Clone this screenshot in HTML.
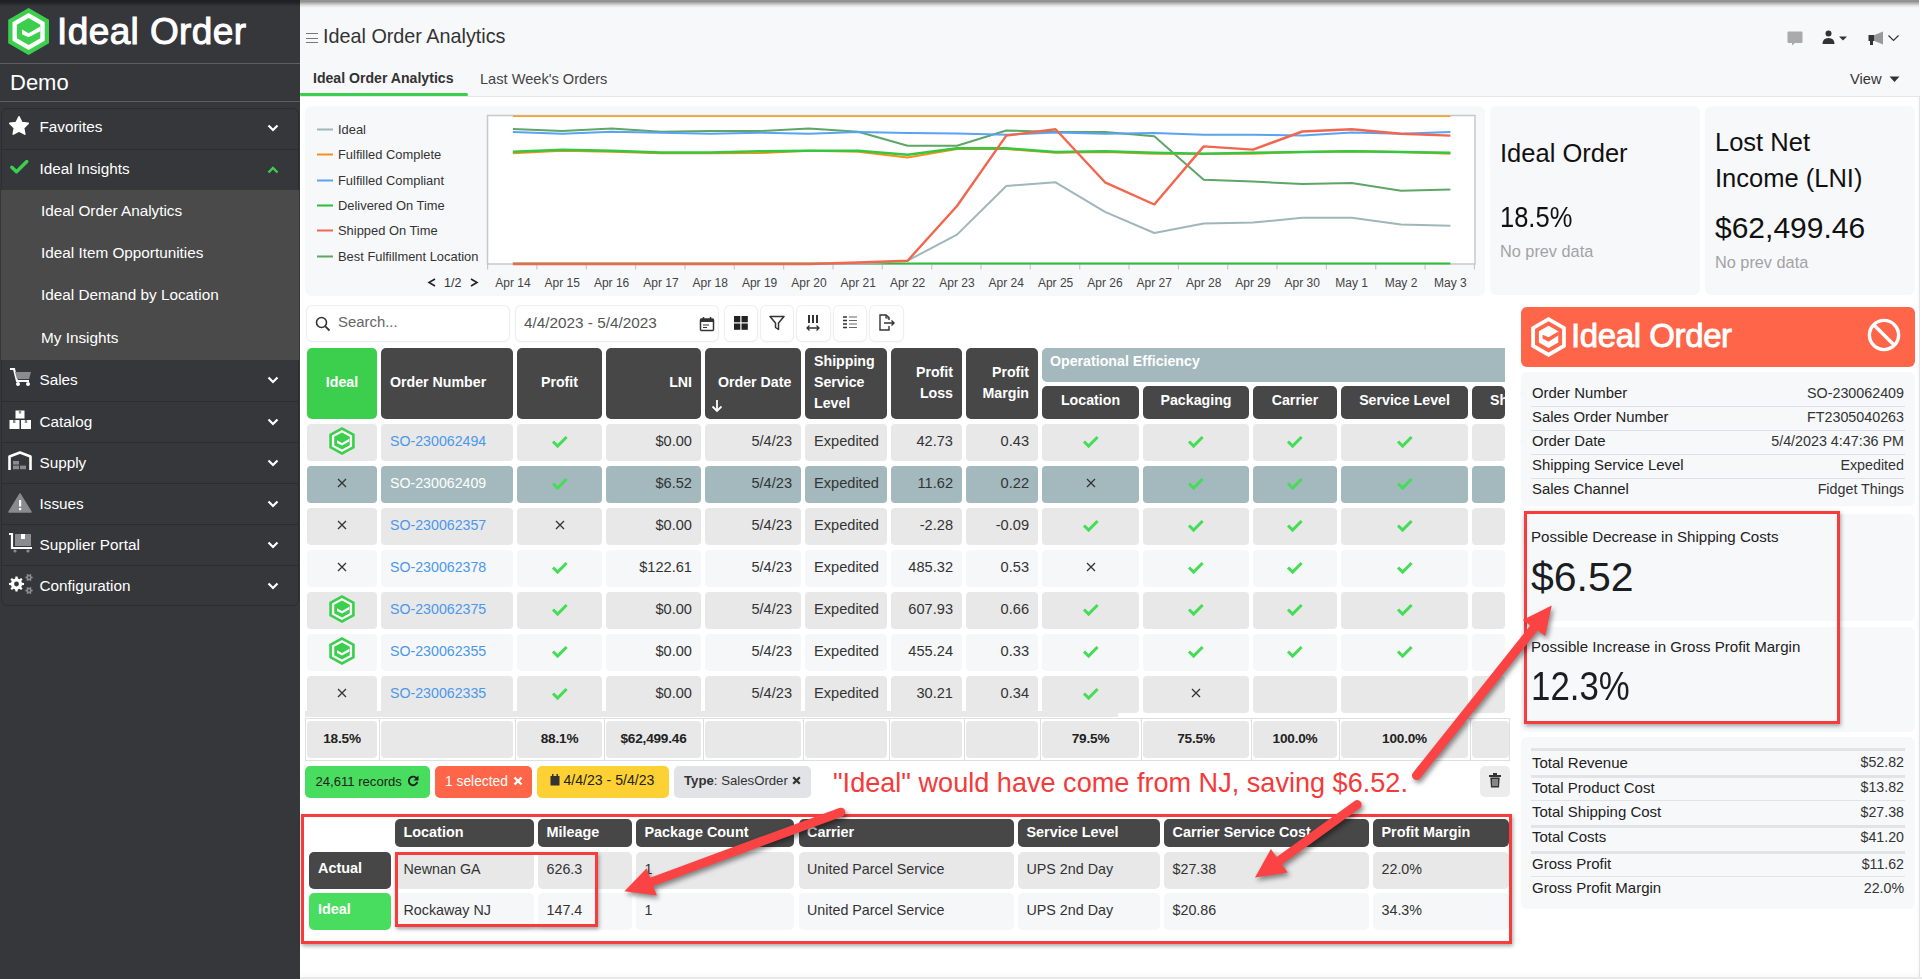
<!DOCTYPE html>
<html><head><meta charset="utf-8">
<style>
*{box-sizing:border-box;margin:0;padding:0}
html,body{width:1922px;height:979px;overflow:hidden;background:#fff;font-family:"Liberation Sans",sans-serif;color:#222}
.a{position:absolute}
.nw{white-space:nowrap}
#sb{left:0;top:0;width:300px;height:979px;background:#36373b}
.sep{left:0;width:300px;height:1px;background:#5e5f63}
.mi{left:1px;width:298px;height:41px;border-top:1px solid #2c2d31}
.mi .t{left:38.5px;top:10px;font-size:15.3px;color:#fff}
.chev{left:266px;top:16px;width:12px;height:8px}
.sub{left:41px;font-size:15.3px;color:#fff}
#main{left:300px;top:0;width:1622px;height:979px;background:#fff}
</style></head><body>
<div id="sb" class="a">
  <svg class="a" style="left:0;top:0" width="60" height="64" viewBox="0 0 60 64">
    <polygon points="28.6,8 49,19.75 49,43.25 28.6,55 8.2,43.25 8.2,19.75" fill="#3ccf4e"/>
    <polygon points="28.6,12.9 44.7,22.2 44.7,40.8 28.6,50.1 12.5,40.8 12.5,22.2" fill="#fff"/>
    <polygon points="28.6,18 40.3,24.75 40.3,38.25 28.6,45 16.9,38.25 16.9,24.75" fill="#3ccf4e"/>
    <polygon points="22,29.4 28.6,33.3 40.3,26.5 40.3,31.2 28.6,37.3 22,34.3" fill="#fff"/>
  </svg>
  <div class="a nw" style="left:57px;top:11px;font-size:37px;color:#fff;-webkit-text-stroke:1px #fff;letter-spacing:0.4px">Ideal Order</div>
  <div class="a sep" style="top:63px"></div>
  <div class="a nw" style="left:10px;top:70px;font-size:22px;color:#fff">Demo</div>
  <div class="a sep" style="top:101px"></div>
  <div class="a" style="left:1px;top:108px;width:298px;height:498px;border-radius:6px;border:1px solid #2c2d31;background:#36373b"></div>
  <!-- menu rows -->
  <div class="a mi" style="top:108px;border-top:none">
    <svg class="a" style="left:7px;top:7px" width="22" height="21" viewBox="0 0 22 21"><polygon points="11,1.8 13.9,7.6 20.2,8.4 15.6,12.8 16.8,19.1 11,16 5.2,19.1 6.4,12.8 1.8,8.4 8.1,7.6" fill="#fff" stroke="#fff" stroke-width="1.6" stroke-linejoin="round"/></svg>
    <div class="a t nw">Favorites</div>
    <svg class="a chev" viewBox="0 0 12 8"><polyline points="1.5,1.5 6,6 10.5,1.5" fill="none" stroke="#fff" stroke-width="2.2"/></svg>
  </div>
  <div class="a mi" style="top:149px">
    <svg class="a" style="left:8px;top:8px" width="22" height="18" viewBox="0 0 22 18"><polyline points="2.8,9.2 7.5,13.8 17.8,3.5" fill="none" stroke="#3ccf4e" stroke-width="3.4" stroke-linecap="round" stroke-linejoin="round"/></svg>
    <div class="a t nw">Ideal Insights</div>
    <svg class="a chev" viewBox="0 0 12 8"><polyline points="1.5,6.5 6,2 10.5,6.5" fill="none" stroke="#3ccf4e" stroke-width="2.4"/></svg>
  </div>
  <div class="a" style="left:1px;top:190px;width:298px;height:170px;background:#4a4a4a"></div>
  <div class="a sub nw" style="top:202px">Ideal Order Analytics</div>
  <div class="a sub nw" style="top:244px">Ideal Item Opportunities</div>
  <div class="a sub nw" style="top:286px">Ideal Demand by Location</div>
  <div class="a sub nw" style="top:329px">My Insights</div>
  <div class="a mi" style="top:360px;border-top:none">
    <svg class="a" style="left:8px;top:6px" width="24" height="22" viewBox="0 0 24 22"><path d="M1,3 H5 L8,15 H20" fill="none" stroke="#fff" stroke-width="2.2"/><polygon points="6,6 22,6 20,13 8,13" fill="#8a8b8e"/><circle cx="9" cy="18" r="2" fill="#fff"/><circle cx="19" cy="18" r="2" fill="#fff"/></svg>
    <div class="a t nw" style="top:10.5px">Sales</div>
    <svg class="a chev" viewBox="0 0 12 8"><polyline points="1.5,1.5 6,6 10.5,1.5" fill="none" stroke="#fff" stroke-width="2.2"/></svg>
  </div>
  <div class="a mi" style="top:401px">
    <svg class="a" style="left:8px;top:8px" width="24" height="20" viewBox="0 0 24 20"><rect x="6.5" y="0.5" width="9" height="8" fill="#fff"/><rect x="0.5" y="10" width="10" height="9" fill="#fff"/><rect x="12" y="10" width="10" height="9" fill="#fff"/><rect x="9.8" y="0.5" width="2.4" height="3" fill="#8a8b8e"/><rect x="4" y="10" width="2.4" height="3" fill="#8a8b8e"/><rect x="15.8" y="10" width="2.4" height="3" fill="#8a8b8e"/></svg>
    <div class="a t nw" style="top:10.5px">Catalog</div>
    <svg class="a chev" viewBox="0 0 12 8"><polyline points="1.5,1.5 6,6 10.5,1.5" fill="none" stroke="#fff" stroke-width="2.2"/></svg>
  </div>
  <div class="a mi" style="top:442px">
    <svg class="a" style="left:7px;top:8px" width="24" height="20" viewBox="0 0 24 20"><path d="M1.5,19 V5.5 L12,1.5 L22.5,5.5 V19" fill="none" stroke="#fff" stroke-width="2.6" stroke-linejoin="round"/><rect x="5" y="10" width="6" height="3.6" fill="#8a8b8e"/><rect x="5" y="14.6" width="6" height="3.6" fill="#8a8b8e"/><rect x="12" y="14.6" width="6" height="3.6" fill="#8a8b8e"/></svg>
    <div class="a t nw" style="top:10.5px">Supply</div>
    <svg class="a chev" viewBox="0 0 12 8"><polyline points="1.5,1.5 6,6 10.5,1.5" fill="none" stroke="#fff" stroke-width="2.2"/></svg>
  </div>
  <div class="a mi" style="top:483px">
    <svg class="a" style="left:7px;top:9px" width="24" height="20" viewBox="0 0 24 20"><polygon points="12,1 23,19 1,19" fill="#8a8b8e" stroke="#8a8b8e" stroke-linejoin="round" stroke-width="1.5"/><rect x="11" y="7" width="2.2" height="6.5" fill="#fff"/><rect x="11" y="15" width="2.2" height="2.2" fill="#fff"/></svg>
    <div class="a t nw" style="top:10.5px">Issues</div>
    <svg class="a chev" viewBox="0 0 12 8"><polyline points="1.5,1.5 6,6 10.5,1.5" fill="none" stroke="#fff" stroke-width="2.2"/></svg>
  </div>
  <div class="a mi" style="top:524px">
    <svg class="a" style="left:7px;top:7px" width="26" height="22" viewBox="0 0 26 22"><path d="M1,2 H4 V16 H24" fill="none" stroke="#fff" stroke-width="2.2"/><rect x="7" y="2" width="16" height="12" fill="#8a8b8e"/><rect x="13" y="2" width="4" height="5" fill="#fff"/><circle cx="7" cy="19" r="1.6" fill="#8a8b8e"/><circle cx="20" cy="19" r="1.6" fill="#8a8b8e"/></svg>
    <div class="a t nw" style="top:10.5px">Supplier Portal</div>
    <svg class="a chev" viewBox="0 0 12 8"><polyline points="1.5,1.5 6,6 10.5,1.5" fill="none" stroke="#fff" stroke-width="2.2"/></svg>
  </div>
  <div class="a mi" style="top:565px">
    <svg class="a" style="left:7px;top:6px" width="26" height="24" viewBox="0 0 26 24"><path d="M13.95,10.69 L16.02,10.93 L16.02,13.07 L13.95,13.31 L13.27,14.93 L14.58,16.56 L13.06,18.08 L11.43,16.77 L9.81,17.45 L9.57,19.52 L7.43,19.52 L7.19,17.45 L5.57,16.77 L3.94,18.08 L2.42,16.56 L3.73,14.93 L3.05,13.31 L0.98,13.07 L0.98,10.93 L3.05,10.69 L3.73,9.07 L2.42,7.44 L3.94,5.92 L5.57,7.23 L7.19,6.55 L7.43,4.48 L9.57,4.48 L9.81,6.55 L11.43,7.23 L13.06,5.92 L14.58,7.44 L13.27,9.07 Z" fill="#fff"/><circle cx="8.5" cy="12" r="2.4" fill="#36373b"/><path d="M23.66,4.63 L24.73,4.79 L24.73,6.21 L23.66,6.37 L23.08,7.37 L23.48,8.38 L22.25,9.09 L21.58,8.24 L20.42,8.24 L19.75,9.09 L18.52,8.38 L18.92,7.37 L18.34,6.37 L17.27,6.21 L17.27,4.79 L18.34,4.63 L18.92,3.63 L18.52,2.62 L19.75,1.91 L20.42,2.76 L21.58,2.76 L22.25,1.91 L23.48,2.62 L23.08,3.63 Z" fill="#8a8b8e"/><circle cx="21" cy="5.5" r="1.1" fill="#36373b"/><path d="M23.66,17.63 L24.73,17.79 L24.73,19.21 L23.66,19.37 L23.08,20.37 L23.48,21.38 L22.25,22.09 L21.58,21.24 L20.42,21.24 L19.75,22.09 L18.52,21.38 L18.92,20.37 L18.34,19.37 L17.27,19.21 L17.27,17.79 L18.34,17.63 L18.92,16.63 L18.52,15.62 L19.75,14.91 L20.42,15.76 L21.58,15.76 L22.25,14.91 L23.48,15.62 L23.08,16.63 Z" fill="#8a8b8e"/><circle cx="21" cy="18.5" r="1.1" fill="#36373b"/></svg>
    <div class="a t nw" style="top:10.5px">Configuration</div>
    <svg class="a chev" viewBox="0 0 12 8"><polyline points="1.5,1.5 6,6 10.5,1.5" fill="none" stroke="#fff" stroke-width="2.2"/></svg>
  </div>
</div>

<div id="main" class="a">
  <div class="a" style="left:0;top:0;width:1620px;height:96px;background:#f7f8fa"></div>
  <div class="a" style="left:0;top:96px;width:1620px;height:1px;background:#e6e7e9"></div>
</div>
<!--HEADER-->
<div class="a" style="left:306px;top:33px;width:12px;height:10px;border-top:1.5px solid #777;border-bottom:1.5px solid #777"></div>
<div class="a" style="left:306px;top:37.5px;width:12px;height:1.5px;background:#777"></div>
<div class="a nw" style="left:323px;top:25px;font-size:19.8px;color:#333">Ideal Order Analytics</div>
<div class="a nw" style="left:313px;top:70px;font-size:14.1px;font-weight:bold;color:#333">Ideal Order Analytics</div>
<div class="a nw" style="left:480px;top:71px;font-size:14.6px;color:#444">Last Week's Orders</div>
<div class="a" style="left:300px;top:93px;width:168px;height:3px;background:#3ccf4e;border-radius:0 2px 2px 2px"></div>
<!-- header icons -->
<svg class="a" style="left:1786px;top:30px" width="18" height="16" viewBox="0 0 18 16"><path d="M2.5,1.5 H15.5 Q16.5,1.5 16.5,2.5 V12 Q16.5,13 15.5,13 H9 L6,15.5 V13 H2.5 Q1.5,13 1.5,12 V2.5 Q1.5,1.5 2.5,1.5Z" fill="#aaa"/></svg>
<svg class="a" style="left:1821px;top:30px" width="28" height="16" viewBox="0 0 28 16"><circle cx="7.5" cy="3.5" r="3" fill="#333"/><path d="M1.5,14 Q1.5,8 7.5,8 Q13.5,8 13.5,14Z" fill="#333"/><polygon points="18,6.5 26,6.5 22,10.5" fill="#333"/></svg>
<svg class="a" style="left:1867px;top:30px" width="34" height="17" viewBox="0 0 34 17"><rect x="1.5" y="5" width="6" height="6" fill="#333"/><rect x="3" y="10" width="3" height="5" fill="#333"/><polygon points="7.5,5 16,1.5 16,14.5 7.5,11" fill="#999"/><polyline points="21.5,5.5 26.5,10.5 31.5,5.5" fill="none" stroke="#333" stroke-width="1.2"/></svg>
<div class="a nw" style="left:1850px;top:71px;font-size:14.7px;color:#333">View</div>
<svg class="a" style="left:1889px;top:76px" width="11" height="7" viewBox="0 0 11 7"><polygon points="0.5,0.5 10.5,0.5 5.5,6" fill="#333"/></svg>
<!--CHART-->
<div class="a" style="left:305px;top:106px;width:1180px;height:190px;background:#f7f8fa;border-radius:6px"></div>
<svg class="a" style="left:305px;top:106px" width="1180" height="190" viewBox="305 106 1180 190">
 <rect x="487.5" y="115.5" width="987.5" height="148.5" fill="#fff" stroke="#c8c8c8" stroke-width="1.5"/>
 <g stroke="#c8c8c8" stroke-width="1.2">
 <line x1="487.6" y1="264" x2="487.6" y2="269.5"/><line x1="536.9" y1="264" x2="536.9" y2="269.5"/><line x1="586.3" y1="264" x2="586.3" y2="269.5"/><line x1="635.6" y1="264" x2="635.6" y2="269.5"/><line x1="685.0" y1="264" x2="685.0" y2="269.5"/><line x1="734.3" y1="264" x2="734.3" y2="269.5"/><line x1="783.6" y1="264" x2="783.6" y2="269.5"/><line x1="833.0" y1="264" x2="833.0" y2="269.5"/><line x1="882.3" y1="264" x2="882.3" y2="269.5"/><line x1="931.7" y1="264" x2="931.7" y2="269.5"/><line x1="981.0" y1="264" x2="981.0" y2="269.5"/><line x1="1030.3" y1="264" x2="1030.3" y2="269.5"/><line x1="1079.7" y1="264" x2="1079.7" y2="269.5"/><line x1="1129.0" y1="264" x2="1129.0" y2="269.5"/><line x1="1178.4" y1="264" x2="1178.4" y2="269.5"/><line x1="1227.7" y1="264" x2="1227.7" y2="269.5"/><line x1="1277.0" y1="264" x2="1277.0" y2="269.5"/><line x1="1326.4" y1="264" x2="1326.4" y2="269.5"/><line x1="1375.7" y1="264" x2="1375.7" y2="269.5"/><line x1="1425.1" y1="264" x2="1425.1" y2="269.5"/><line x1="1474.4" y1="264" x2="1474.4" y2="269.5"/>
 </g>
 <g fill="none" stroke-width="2" stroke-linejoin="round">
 <polyline stroke="#f5a31a" stroke-width="1.6" points="512.9,116.3 1450.4,116.3"/>
 <polyline stroke="#2dbd3a" points="512.9,263.5 1450.4,263.5"/>
 <polyline stroke="#9fb6ba" points="512.9,264.0 562.2,264.0 611.6,264.0 660.9,264.0 710.3,264.0 759.6,264.0 808.9,264.0 858.3,264.0 907.6,260.7 957.0,234.6 1006.3,186.0 1055.6,182.3 1105.0,211.8 1154.3,233.0 1203.7,223.5 1253.0,222.6 1302.3,217.8 1351.7,217.8 1401.0,224.5 1450.4,225.7"/>
 <polyline stroke="#5ea566" points="512.9,129.0 562.2,131.0 611.6,128.5 660.9,131.7 710.3,131.0 759.6,131.0 808.9,128.5 858.3,131.7 907.6,145.8 957.0,145.8 1006.3,130.5 1055.6,132.0 1105.0,132.0 1154.3,136.3 1203.7,179.7 1253.0,181.6 1302.3,183.9 1351.7,182.9 1401.0,190.8 1450.4,189.6"/>
 <polyline stroke="#5aa2f2" points="512.9,132.0 562.2,133.7 611.6,131.7 660.9,132.7 710.3,133.7 759.6,132.7 808.9,133.7 858.3,132.0 907.6,133.0 957.0,133.4 1006.3,134.7 1055.6,132.4 1105.0,133.7 1154.3,133.0 1203.7,134.7 1253.0,134.7 1302.3,135.6 1351.7,132.4 1401.0,133.7 1450.4,132.0"/>
 <polyline stroke="#f5901a" points="512.9,153.3 562.2,150.8 611.6,151.8 660.9,153.3 710.3,153.3 759.6,153.0 808.9,150.8 858.3,151.8 907.6,157.5 957.0,149.0 1006.3,149.0 1055.6,152.8 1105.0,152.0 1154.3,153.7 1203.7,153.7 1253.0,153.7 1302.3,152.0 1351.7,151.2 1401.0,152.0 1450.4,153.7"/>
 <polyline stroke="#37c63f" stroke-width="2.4" points="512.9,151.8 562.2,149.8 611.6,150.8 660.9,152.5 710.3,152.5 759.6,151.2 808.9,150.8 858.3,150.8 907.6,154.7 957.0,148.3 1006.3,148.3 1055.6,152.0 1105.0,151.2 1154.3,152.8 1203.7,153.7 1253.0,152.8 1302.3,152.0 1351.7,151.2 1401.0,152.0 1450.4,152.8"/>
 <polyline stroke="#f2664f" stroke-width="2.4" points="512.9,264.0 562.2,264.0 611.6,264.0 660.9,264.0 710.3,264.0 759.6,264.0 808.9,264.0 858.3,262.5 907.6,260.7 957.0,206.0 1006.3,135.6 1055.6,129.3 1105.0,182.3 1154.3,204.5 1203.7,146.4 1253.0,149.6 1302.3,131.5 1351.7,129.3 1401.0,133.7 1450.4,135.6"/>
 </g>
 <g fill="#444" font-family="Liberation Sans" font-size="12" text-anchor="middle">
 <text x="512.9" y="287">Apr 14</text><text x="562.2" y="287">Apr 15</text><text x="611.6" y="287">Apr 16</text><text x="660.9" y="287">Apr 17</text><text x="710.3" y="287">Apr 18</text><text x="759.6" y="287">Apr 19</text><text x="808.9" y="287">Apr 20</text><text x="858.3" y="287">Apr 21</text><text x="907.6" y="287">Apr 22</text><text x="957.0" y="287">Apr 23</text><text x="1006.3" y="287">Apr 24</text><text x="1055.6" y="287">Apr 25</text><text x="1105.0" y="287">Apr 26</text><text x="1154.3" y="287">Apr 27</text><text x="1203.7" y="287">Apr 28</text><text x="1253.0" y="287">Apr 29</text><text x="1302.3" y="287">Apr 30</text><text x="1351.7" y="287">May 1</text><text x="1401.0" y="287">May 2</text><text x="1450.4" y="287">May 3</text>
 </g>
 <g font-family="Liberation Sans" font-size="12.9" fill="#333">
 <line x1="317" y1="129.5" x2="333" y2="129.5" stroke="#9fb6ba" stroke-width="2"/><text x="338" y="134">Ideal</text>
 <line x1="317" y1="154.5" x2="333" y2="154.5" stroke="#f5901a" stroke-width="2"/><text x="338" y="159">Fulfilled Complete</text>
 <line x1="317" y1="180.5" x2="333" y2="180.5" stroke="#5aa2f2" stroke-width="2"/><text x="338" y="185">Fulfilled Compliant</text>
 <line x1="317" y1="205.5" x2="333" y2="205.5" stroke="#2dbd3a" stroke-width="2"/><text x="338" y="210">Delivered On Time</text>
 <line x1="317" y1="230.5" x2="333" y2="230.5" stroke="#f2664f" stroke-width="2"/><text x="338" y="235">Shipped On Time</text>
 <line x1="317" y1="256.5" x2="333" y2="256.5" stroke="#5ea566" stroke-width="2"/><text x="338" y="261">Best Fulfillment Location</text>
 <text x="444" y="287" font-size="12.5">1/2</text>
 <polyline points="435,279 429,282.5 435,286" fill="none" stroke="#222" stroke-width="1.6"/>
 <polyline points="471,279 477,282.5 471,286" fill="none" stroke="#222" stroke-width="1.6"/>
 </g>
</svg>
<!--KPI-->
<div class="a" style="left:1490px;top:106px;width:210px;height:189px;background:#f7f8fa;border-radius:6px"></div>
<div class="a" style="left:1705px;top:106px;width:210px;height:189px;background:#f7f8fa;border-radius:6px"></div>
<div class="a nw" style="left:1500px;top:139px;font-size:25.5px;color:#111">Ideal Order</div>
<div class="a nw" style="left:1500px;top:200px;font-size:30px;color:#111;transform:scaleX(0.85);transform-origin:0 0">18.5%</div>
<div class="a nw" style="left:1500px;top:242px;font-size:16.3px;color:#a3a3a3">No prev data</div>
<div class="a nw" style="left:1715px;top:124px;font-size:25.5px;line-height:36px;color:#111">Lost Net<br>Income (LNI)</div>
<div class="a nw" style="left:1715px;top:211px;font-size:30px;color:#111">$62,499.46</div>
<div class="a nw" style="left:1715px;top:253px;font-size:16.3px;color:#a3a3a3">No prev data</div>

<!--TABLE-->
<div class="a" style="left:300px;top:340px;width:1210px;height:425px;overflow:hidden">
<div class="a" style="left:7px;top:8px;width:70px;height:71px;background:#3ccf4e;border-radius:4px;border-radius:5px"></div>
<div class="a" style="left:81px;top:8px;width:132px;height:71px;background:#474747;border-radius:4px;border-radius:5px"></div>
<div class="a" style="left:217px;top:8px;width:85px;height:71px;background:#474747;border-radius:4px;border-radius:5px"></div>
<div class="a" style="left:306px;top:8px;width:95px;height:71px;background:#474747;border-radius:4px;border-radius:5px"></div>
<div class="a" style="left:405px;top:8px;width:96px;height:71px;background:#474747;border-radius:4px;border-radius:5px"></div>
<div class="a" style="left:505px;top:8px;width:82px;height:71px;background:#474747;border-radius:4px;border-radius:5px"></div>
<div class="a" style="left:591px;top:8px;width:71px;height:71px;background:#474747;border-radius:4px;border-radius:5px"></div>
<div class="a" style="left:666px;top:8px;width:72px;height:71px;background:#474747;border-radius:4px;border-radius:5px"></div>
<div class="a" style="left:742px;top:8px;width:463px;height:34px;background:#a3b9bd;border-radius:4px;border-radius:5px 0 0 5px"></div>
<div class="a nw" style="left:750px;top:13px;font-size:14.2px;font-weight:bold;color:#fff">Operational Efficiency</div>
<div class="a" style="left:742px;top:46px;width:97px;height:33px;background:#474747;border-radius:4px;border-radius:5px"></div>
<div class="a" style="left:843px;top:46px;width:106px;height:33px;background:#474747;border-radius:4px;border-radius:5px"></div>
<div class="a" style="left:953px;top:46px;width:84px;height:33px;background:#474747;border-radius:4px;border-radius:5px"></div>
<div class="a" style="left:1041px;top:46px;width:127px;height:33px;background:#474747;border-radius:4px;border-radius:5px"></div>
<div class="a" style="left:1172px;top:46px;width:33px;height:33px;background:#474747;border-radius:4px;border-radius:5px"></div>
<div class="a nw" style="left:-58px;width:200px;text-align:center;top:34px;font-size:14.2px;font-weight:bold;color:#fff">Ideal</div>
<div class="a nw" style="left:90px;top:34px;font-size:14.2px;font-weight:bold;color:#fff">Order Number</div>
<div class="a nw" style="left:159.5px;width:200px;text-align:center;top:34px;font-size:14.2px;font-weight:bold;color:#fff">Profit</div>
<div class="a nw" style="right:818px;top:34px;font-size:14.2px;font-weight:bold;color:#fff">LNI</div>
<div class="a nw" style="left:418px;top:34px;font-size:14.2px;font-weight:bold;color:#fff">Order Date</div>
<svg class="a" style="left:410px;top:59px" width="14" height="14" viewBox="0 0 14 14"><path d="M7,1 V12 M2.5,7.5 L7,12 L11.5,7.5" stroke="#fff" stroke-width="1.8" fill="none"/></svg>
<div class="a nw" style="left:514px;top:11px;line-height:21px;font-size:14.2px;font-weight:bold;color:#fff">Shipping<br>Service<br>Level</div>
<div class="a nw" style="right:557px;top:22px;line-height:21px;text-align:right;font-size:14.2px;font-weight:bold;color:#fff">Profit<br>Loss</div>
<div class="a nw" style="right:481px;top:22px;line-height:21px;text-align:right;font-size:14.2px;font-weight:bold;color:#fff">Profit<br>Margin</div>
<div class="a nw" style="left:690.5px;width:200px;text-align:center;top:52px;font-size:14.2px;font-weight:bold;color:#fff">Location</div>
<div class="a nw" style="left:796px;width:200px;text-align:center;top:52px;font-size:14.2px;font-weight:bold;color:#fff">Packaging</div>
<div class="a nw" style="left:895px;width:200px;text-align:center;top:52px;font-size:14.2px;font-weight:bold;color:#fff">Carrier</div>
<div class="a nw" style="left:1004.5px;width:200px;text-align:center;top:52px;font-size:14.2px;font-weight:bold;color:#fff">Service Level</div>
<div class="a" style="left:1172px;top:46px;width:33px;height:33px;overflow:hidden"><div class="nw" style="padding:6px 0 0 18px;font-size:14.2px;font-weight:bold;color:#fff">Shipping</div></div>
<div class="a" style="left:7px;top:84px;width:70px;height:37px;background:#e8e8e8;border-radius:4px;"></div>
<div class="a" style="left:81px;top:84px;width:132px;height:37px;background:#e8e8e8;border-radius:4px;"></div>
<div class="a" style="left:217px;top:84px;width:85px;height:37px;background:#e8e8e8;border-radius:4px;"></div>
<div class="a" style="left:306px;top:84px;width:95px;height:37px;background:#e8e8e8;border-radius:4px;"></div>
<div class="a" style="left:405px;top:84px;width:96px;height:37px;background:#e8e8e8;border-radius:4px;"></div>
<div class="a" style="left:505px;top:84px;width:82px;height:37px;background:#e8e8e8;border-radius:4px;"></div>
<div class="a" style="left:591px;top:84px;width:71px;height:37px;background:#e8e8e8;border-radius:4px;"></div>
<div class="a" style="left:666px;top:84px;width:72px;height:37px;background:#e8e8e8;border-radius:4px;"></div>
<div class="a" style="left:742px;top:84px;width:97px;height:37px;background:#e8e8e8;border-radius:4px;"></div>
<div class="a" style="left:843px;top:84px;width:106px;height:37px;background:#e8e8e8;border-radius:4px;"></div>
<div class="a" style="left:953px;top:84px;width:84px;height:37px;background:#e8e8e8;border-radius:4px;"></div>
<div class="a" style="left:1041px;top:84px;width:127px;height:37px;background:#e8e8e8;border-radius:4px;"></div>
<div class="a" style="left:1172px;top:84px;width:33px;height:37px;background:#e8e8e8;border-radius:4px;"></div>
<svg class="a" style="left:28.3px;top:86.3px" width="28" height="30" viewBox="0.7 0 26.6 30" preserveAspectRatio="none"><polygon points="14,1 26.1,8 26.1,22 14,29 1.9,22 1.9,8" fill="#3ccf4e"/><polygon points="14,3.9 23.6,9.45 23.6,20.55 14,26.1 4.4,20.55 4.4,9.45" fill="#fff"/><polygon points="14,6.5 21.4,10.75 21.4,19.25 14,23.5 6.6,19.25 6.6,10.75" fill="#3ccf4e"/><polygon points="9.3,14.2 14,16.9 21,12.8 21,15.5 14,19.6 9.3,16.9" fill="#fff"/></svg>
<div class="a nw" style="left:90px;top:93px;font-size:14.2px;color:#4b97ec">SO-230062494</div>
<svg class="a" style="left:250.5px;top:95px" width="18" height="14" viewBox="0 0 18 14"><polyline points="2,6.5 6.6,11 15.6,2" fill="none" stroke="#45dd57" stroke-width="3.1"/></svg>
<div class="a nw" style="right:818px;top:93px;font-size:14.6px;color:#333">$0.00</div>
<div class="a nw" style="right:718px;top:93px;font-size:14.6px;color:#333">5/4/23</div>
<div class="a nw" style="left:514px;top:93px;font-size:14.6px;color:#333">Expedited</div>
<div class="a nw" style="right:557px;top:93px;font-size:14.6px;color:#333">42.73</div>
<div class="a nw" style="right:481px;top:93px;font-size:14.6px;color:#333">0.43</div>
<svg class="a" style="left:781.5px;top:95px" width="18" height="14" viewBox="0 0 18 14"><polyline points="2,6.5 6.6,11 15.6,2" fill="none" stroke="#45dd57" stroke-width="3.1"/></svg>
<svg class="a" style="left:887px;top:95px" width="18" height="14" viewBox="0 0 18 14"><polyline points="2,6.5 6.6,11 15.6,2" fill="none" stroke="#45dd57" stroke-width="3.1"/></svg>
<svg class="a" style="left:986px;top:95px" width="18" height="14" viewBox="0 0 18 14"><polyline points="2,6.5 6.6,11 15.6,2" fill="none" stroke="#45dd57" stroke-width="3.1"/></svg>
<svg class="a" style="left:1095.5px;top:95px" width="18" height="14" viewBox="0 0 18 14"><polyline points="2,6.5 6.6,11 15.6,2" fill="none" stroke="#45dd57" stroke-width="3.1"/></svg>
<div class="a" style="left:7px;top:126px;width:70px;height:37px;background:#a3b9bd;border-radius:4px;"></div>
<div class="a" style="left:81px;top:126px;width:132px;height:37px;background:#a3b9bd;border-radius:4px;"></div>
<div class="a" style="left:217px;top:126px;width:85px;height:37px;background:#a3b9bd;border-radius:4px;"></div>
<div class="a" style="left:306px;top:126px;width:95px;height:37px;background:#a3b9bd;border-radius:4px;"></div>
<div class="a" style="left:405px;top:126px;width:96px;height:37px;background:#a3b9bd;border-radius:4px;"></div>
<div class="a" style="left:505px;top:126px;width:82px;height:37px;background:#a3b9bd;border-radius:4px;"></div>
<div class="a" style="left:591px;top:126px;width:71px;height:37px;background:#a3b9bd;border-radius:4px;"></div>
<div class="a" style="left:666px;top:126px;width:72px;height:37px;background:#a3b9bd;border-radius:4px;"></div>
<div class="a" style="left:742px;top:126px;width:97px;height:37px;background:#a3b9bd;border-radius:4px;"></div>
<div class="a" style="left:843px;top:126px;width:106px;height:37px;background:#a3b9bd;border-radius:4px;"></div>
<div class="a" style="left:953px;top:126px;width:84px;height:37px;background:#a3b9bd;border-radius:4px;"></div>
<div class="a" style="left:1041px;top:126px;width:127px;height:37px;background:#a3b9bd;border-radius:4px;"></div>
<div class="a" style="left:1172px;top:126px;width:33px;height:37px;background:#a3b9bd;border-radius:4px;"></div>
<svg class="a" style="left:37.3px;top:137.5px" width="10" height="10" viewBox="0 0 10 10"><path d="M1,1 L9,9 M9,1 L1,9" stroke="#333" stroke-width="1.3" fill="none"/></svg>
<div class="a nw" style="left:90px;top:135px;font-size:14.2px;color:#fff">SO-230062409</div>
<svg class="a" style="left:250.5px;top:137px" width="18" height="14" viewBox="0 0 18 14"><polyline points="2,6.5 6.6,11 15.6,2" fill="none" stroke="#45dd57" stroke-width="3.1"/></svg>
<div class="a nw" style="right:818px;top:135px;font-size:14.6px;color:#333">$6.52</div>
<div class="a nw" style="right:718px;top:135px;font-size:14.6px;color:#333">5/4/23</div>
<div class="a nw" style="left:514px;top:135px;font-size:14.6px;color:#333">Expedited</div>
<div class="a nw" style="right:557px;top:135px;font-size:14.6px;color:#333">11.62</div>
<div class="a nw" style="right:481px;top:135px;font-size:14.6px;color:#333">0.22</div>
<svg class="a" style="left:785.5px;top:137.5px" width="10" height="10" viewBox="0 0 10 10"><path d="M1,1 L9,9 M9,1 L1,9" stroke="#333" stroke-width="1.3" fill="none"/></svg>
<svg class="a" style="left:887px;top:137px" width="18" height="14" viewBox="0 0 18 14"><polyline points="2,6.5 6.6,11 15.6,2" fill="none" stroke="#45dd57" stroke-width="3.1"/></svg>
<svg class="a" style="left:986px;top:137px" width="18" height="14" viewBox="0 0 18 14"><polyline points="2,6.5 6.6,11 15.6,2" fill="none" stroke="#45dd57" stroke-width="3.1"/></svg>
<svg class="a" style="left:1095.5px;top:137px" width="18" height="14" viewBox="0 0 18 14"><polyline points="2,6.5 6.6,11 15.6,2" fill="none" stroke="#45dd57" stroke-width="3.1"/></svg>
<div class="a" style="left:7px;top:168px;width:70px;height:37px;background:#e8e8e8;border-radius:4px;"></div>
<div class="a" style="left:81px;top:168px;width:132px;height:37px;background:#e8e8e8;border-radius:4px;"></div>
<div class="a" style="left:217px;top:168px;width:85px;height:37px;background:#e8e8e8;border-radius:4px;"></div>
<div class="a" style="left:306px;top:168px;width:95px;height:37px;background:#e8e8e8;border-radius:4px;"></div>
<div class="a" style="left:405px;top:168px;width:96px;height:37px;background:#e8e8e8;border-radius:4px;"></div>
<div class="a" style="left:505px;top:168px;width:82px;height:37px;background:#e8e8e8;border-radius:4px;"></div>
<div class="a" style="left:591px;top:168px;width:71px;height:37px;background:#e8e8e8;border-radius:4px;"></div>
<div class="a" style="left:666px;top:168px;width:72px;height:37px;background:#e8e8e8;border-radius:4px;"></div>
<div class="a" style="left:742px;top:168px;width:97px;height:37px;background:#e8e8e8;border-radius:4px;"></div>
<div class="a" style="left:843px;top:168px;width:106px;height:37px;background:#e8e8e8;border-radius:4px;"></div>
<div class="a" style="left:953px;top:168px;width:84px;height:37px;background:#e8e8e8;border-radius:4px;"></div>
<div class="a" style="left:1041px;top:168px;width:127px;height:37px;background:#e8e8e8;border-radius:4px;"></div>
<div class="a" style="left:1172px;top:168px;width:33px;height:37px;background:#e8e8e8;border-radius:4px;"></div>
<svg class="a" style="left:37.3px;top:179.5px" width="10" height="10" viewBox="0 0 10 10"><path d="M1,1 L9,9 M9,1 L1,9" stroke="#333" stroke-width="1.3" fill="none"/></svg>
<div class="a nw" style="left:90px;top:177px;font-size:14.2px;color:#4b97ec">SO-230062357</div>
<svg class="a" style="left:254.5px;top:179.5px" width="10" height="10" viewBox="0 0 10 10"><path d="M1,1 L9,9 M9,1 L1,9" stroke="#333" stroke-width="1.3" fill="none"/></svg>
<div class="a nw" style="right:818px;top:177px;font-size:14.6px;color:#333">$0.00</div>
<div class="a nw" style="right:718px;top:177px;font-size:14.6px;color:#333">5/4/23</div>
<div class="a nw" style="left:514px;top:177px;font-size:14.6px;color:#333">Expedited</div>
<div class="a nw" style="right:557px;top:177px;font-size:14.6px;color:#333">-2.28</div>
<div class="a nw" style="right:481px;top:177px;font-size:14.6px;color:#333">-0.09</div>
<svg class="a" style="left:781.5px;top:179px" width="18" height="14" viewBox="0 0 18 14"><polyline points="2,6.5 6.6,11 15.6,2" fill="none" stroke="#45dd57" stroke-width="3.1"/></svg>
<svg class="a" style="left:887px;top:179px" width="18" height="14" viewBox="0 0 18 14"><polyline points="2,6.5 6.6,11 15.6,2" fill="none" stroke="#45dd57" stroke-width="3.1"/></svg>
<svg class="a" style="left:986px;top:179px" width="18" height="14" viewBox="0 0 18 14"><polyline points="2,6.5 6.6,11 15.6,2" fill="none" stroke="#45dd57" stroke-width="3.1"/></svg>
<svg class="a" style="left:1095.5px;top:179px" width="18" height="14" viewBox="0 0 18 14"><polyline points="2,6.5 6.6,11 15.6,2" fill="none" stroke="#45dd57" stroke-width="3.1"/></svg>
<div class="a" style="left:7px;top:210px;width:70px;height:37px;background:#f6f7f9;border-radius:4px;"></div>
<div class="a" style="left:81px;top:210px;width:132px;height:37px;background:#f6f7f9;border-radius:4px;"></div>
<div class="a" style="left:217px;top:210px;width:85px;height:37px;background:#f6f7f9;border-radius:4px;"></div>
<div class="a" style="left:306px;top:210px;width:95px;height:37px;background:#f6f7f9;border-radius:4px;"></div>
<div class="a" style="left:405px;top:210px;width:96px;height:37px;background:#f6f7f9;border-radius:4px;"></div>
<div class="a" style="left:505px;top:210px;width:82px;height:37px;background:#f6f7f9;border-radius:4px;"></div>
<div class="a" style="left:591px;top:210px;width:71px;height:37px;background:#f6f7f9;border-radius:4px;"></div>
<div class="a" style="left:666px;top:210px;width:72px;height:37px;background:#f6f7f9;border-radius:4px;"></div>
<div class="a" style="left:742px;top:210px;width:97px;height:37px;background:#f6f7f9;border-radius:4px;"></div>
<div class="a" style="left:843px;top:210px;width:106px;height:37px;background:#f6f7f9;border-radius:4px;"></div>
<div class="a" style="left:953px;top:210px;width:84px;height:37px;background:#f6f7f9;border-radius:4px;"></div>
<div class="a" style="left:1041px;top:210px;width:127px;height:37px;background:#f6f7f9;border-radius:4px;"></div>
<div class="a" style="left:1172px;top:210px;width:33px;height:37px;background:#f6f7f9;border-radius:4px;"></div>
<svg class="a" style="left:37.3px;top:221.5px" width="10" height="10" viewBox="0 0 10 10"><path d="M1,1 L9,9 M9,1 L1,9" stroke="#333" stroke-width="1.3" fill="none"/></svg>
<div class="a nw" style="left:90px;top:219px;font-size:14.2px;color:#4b97ec">SO-230062378</div>
<svg class="a" style="left:250.5px;top:221px" width="18" height="14" viewBox="0 0 18 14"><polyline points="2,6.5 6.6,11 15.6,2" fill="none" stroke="#45dd57" stroke-width="3.1"/></svg>
<div class="a nw" style="right:818px;top:219px;font-size:14.6px;color:#333">$122.61</div>
<div class="a nw" style="right:718px;top:219px;font-size:14.6px;color:#333">5/4/23</div>
<div class="a nw" style="left:514px;top:219px;font-size:14.6px;color:#333">Expedited</div>
<div class="a nw" style="right:557px;top:219px;font-size:14.6px;color:#333">485.32</div>
<div class="a nw" style="right:481px;top:219px;font-size:14.6px;color:#333">0.53</div>
<svg class="a" style="left:785.5px;top:221.5px" width="10" height="10" viewBox="0 0 10 10"><path d="M1,1 L9,9 M9,1 L1,9" stroke="#333" stroke-width="1.3" fill="none"/></svg>
<svg class="a" style="left:887px;top:221px" width="18" height="14" viewBox="0 0 18 14"><polyline points="2,6.5 6.6,11 15.6,2" fill="none" stroke="#45dd57" stroke-width="3.1"/></svg>
<svg class="a" style="left:986px;top:221px" width="18" height="14" viewBox="0 0 18 14"><polyline points="2,6.5 6.6,11 15.6,2" fill="none" stroke="#45dd57" stroke-width="3.1"/></svg>
<svg class="a" style="left:1095.5px;top:221px" width="18" height="14" viewBox="0 0 18 14"><polyline points="2,6.5 6.6,11 15.6,2" fill="none" stroke="#45dd57" stroke-width="3.1"/></svg>
<div class="a" style="left:7px;top:252px;width:70px;height:37px;background:#e8e8e8;border-radius:4px;"></div>
<div class="a" style="left:81px;top:252px;width:132px;height:37px;background:#e8e8e8;border-radius:4px;"></div>
<div class="a" style="left:217px;top:252px;width:85px;height:37px;background:#e8e8e8;border-radius:4px;"></div>
<div class="a" style="left:306px;top:252px;width:95px;height:37px;background:#e8e8e8;border-radius:4px;"></div>
<div class="a" style="left:405px;top:252px;width:96px;height:37px;background:#e8e8e8;border-radius:4px;"></div>
<div class="a" style="left:505px;top:252px;width:82px;height:37px;background:#e8e8e8;border-radius:4px;"></div>
<div class="a" style="left:591px;top:252px;width:71px;height:37px;background:#e8e8e8;border-radius:4px;"></div>
<div class="a" style="left:666px;top:252px;width:72px;height:37px;background:#e8e8e8;border-radius:4px;"></div>
<div class="a" style="left:742px;top:252px;width:97px;height:37px;background:#e8e8e8;border-radius:4px;"></div>
<div class="a" style="left:843px;top:252px;width:106px;height:37px;background:#e8e8e8;border-radius:4px;"></div>
<div class="a" style="left:953px;top:252px;width:84px;height:37px;background:#e8e8e8;border-radius:4px;"></div>
<div class="a" style="left:1041px;top:252px;width:127px;height:37px;background:#e8e8e8;border-radius:4px;"></div>
<div class="a" style="left:1172px;top:252px;width:33px;height:37px;background:#e8e8e8;border-radius:4px;"></div>
<svg class="a" style="left:28.3px;top:254.3px" width="28" height="30" viewBox="0.7 0 26.6 30" preserveAspectRatio="none"><polygon points="14,1 26.1,8 26.1,22 14,29 1.9,22 1.9,8" fill="#3ccf4e"/><polygon points="14,3.9 23.6,9.45 23.6,20.55 14,26.1 4.4,20.55 4.4,9.45" fill="#fff"/><polygon points="14,6.5 21.4,10.75 21.4,19.25 14,23.5 6.6,19.25 6.6,10.75" fill="#3ccf4e"/><polygon points="9.3,14.2 14,16.9 21,12.8 21,15.5 14,19.6 9.3,16.9" fill="#fff"/></svg>
<div class="a nw" style="left:90px;top:261px;font-size:14.2px;color:#4b97ec">SO-230062375</div>
<svg class="a" style="left:250.5px;top:263px" width="18" height="14" viewBox="0 0 18 14"><polyline points="2,6.5 6.6,11 15.6,2" fill="none" stroke="#45dd57" stroke-width="3.1"/></svg>
<div class="a nw" style="right:818px;top:261px;font-size:14.6px;color:#333">$0.00</div>
<div class="a nw" style="right:718px;top:261px;font-size:14.6px;color:#333">5/4/23</div>
<div class="a nw" style="left:514px;top:261px;font-size:14.6px;color:#333">Expedited</div>
<div class="a nw" style="right:557px;top:261px;font-size:14.6px;color:#333">607.93</div>
<div class="a nw" style="right:481px;top:261px;font-size:14.6px;color:#333">0.66</div>
<svg class="a" style="left:781.5px;top:263px" width="18" height="14" viewBox="0 0 18 14"><polyline points="2,6.5 6.6,11 15.6,2" fill="none" stroke="#45dd57" stroke-width="3.1"/></svg>
<svg class="a" style="left:887px;top:263px" width="18" height="14" viewBox="0 0 18 14"><polyline points="2,6.5 6.6,11 15.6,2" fill="none" stroke="#45dd57" stroke-width="3.1"/></svg>
<svg class="a" style="left:986px;top:263px" width="18" height="14" viewBox="0 0 18 14"><polyline points="2,6.5 6.6,11 15.6,2" fill="none" stroke="#45dd57" stroke-width="3.1"/></svg>
<svg class="a" style="left:1095.5px;top:263px" width="18" height="14" viewBox="0 0 18 14"><polyline points="2,6.5 6.6,11 15.6,2" fill="none" stroke="#45dd57" stroke-width="3.1"/></svg>
<div class="a" style="left:7px;top:294px;width:70px;height:37px;background:#f6f7f9;border-radius:4px;"></div>
<div class="a" style="left:81px;top:294px;width:132px;height:37px;background:#f6f7f9;border-radius:4px;"></div>
<div class="a" style="left:217px;top:294px;width:85px;height:37px;background:#f6f7f9;border-radius:4px;"></div>
<div class="a" style="left:306px;top:294px;width:95px;height:37px;background:#f6f7f9;border-radius:4px;"></div>
<div class="a" style="left:405px;top:294px;width:96px;height:37px;background:#f6f7f9;border-radius:4px;"></div>
<div class="a" style="left:505px;top:294px;width:82px;height:37px;background:#f6f7f9;border-radius:4px;"></div>
<div class="a" style="left:591px;top:294px;width:71px;height:37px;background:#f6f7f9;border-radius:4px;"></div>
<div class="a" style="left:666px;top:294px;width:72px;height:37px;background:#f6f7f9;border-radius:4px;"></div>
<div class="a" style="left:742px;top:294px;width:97px;height:37px;background:#f6f7f9;border-radius:4px;"></div>
<div class="a" style="left:843px;top:294px;width:106px;height:37px;background:#f6f7f9;border-radius:4px;"></div>
<div class="a" style="left:953px;top:294px;width:84px;height:37px;background:#f6f7f9;border-radius:4px;"></div>
<div class="a" style="left:1041px;top:294px;width:127px;height:37px;background:#f6f7f9;border-radius:4px;"></div>
<div class="a" style="left:1172px;top:294px;width:33px;height:37px;background:#f6f7f9;border-radius:4px;"></div>
<svg class="a" style="left:28.3px;top:296.3px" width="28" height="30" viewBox="0.7 0 26.6 30" preserveAspectRatio="none"><polygon points="14,1 26.1,8 26.1,22 14,29 1.9,22 1.9,8" fill="#3ccf4e"/><polygon points="14,3.9 23.6,9.45 23.6,20.55 14,26.1 4.4,20.55 4.4,9.45" fill="#fff"/><polygon points="14,6.5 21.4,10.75 21.4,19.25 14,23.5 6.6,19.25 6.6,10.75" fill="#3ccf4e"/><polygon points="9.3,14.2 14,16.9 21,12.8 21,15.5 14,19.6 9.3,16.9" fill="#fff"/></svg>
<div class="a nw" style="left:90px;top:303px;font-size:14.2px;color:#4b97ec">SO-230062355</div>
<svg class="a" style="left:250.5px;top:305px" width="18" height="14" viewBox="0 0 18 14"><polyline points="2,6.5 6.6,11 15.6,2" fill="none" stroke="#45dd57" stroke-width="3.1"/></svg>
<div class="a nw" style="right:818px;top:303px;font-size:14.6px;color:#333">$0.00</div>
<div class="a nw" style="right:718px;top:303px;font-size:14.6px;color:#333">5/4/23</div>
<div class="a nw" style="left:514px;top:303px;font-size:14.6px;color:#333">Expedited</div>
<div class="a nw" style="right:557px;top:303px;font-size:14.6px;color:#333">455.24</div>
<div class="a nw" style="right:481px;top:303px;font-size:14.6px;color:#333">0.33</div>
<svg class="a" style="left:781.5px;top:305px" width="18" height="14" viewBox="0 0 18 14"><polyline points="2,6.5 6.6,11 15.6,2" fill="none" stroke="#45dd57" stroke-width="3.1"/></svg>
<svg class="a" style="left:887px;top:305px" width="18" height="14" viewBox="0 0 18 14"><polyline points="2,6.5 6.6,11 15.6,2" fill="none" stroke="#45dd57" stroke-width="3.1"/></svg>
<svg class="a" style="left:986px;top:305px" width="18" height="14" viewBox="0 0 18 14"><polyline points="2,6.5 6.6,11 15.6,2" fill="none" stroke="#45dd57" stroke-width="3.1"/></svg>
<svg class="a" style="left:1095.5px;top:305px" width="18" height="14" viewBox="0 0 18 14"><polyline points="2,6.5 6.6,11 15.6,2" fill="none" stroke="#45dd57" stroke-width="3.1"/></svg>
<div class="a" style="left:7px;top:336px;width:70px;height:37px;background:#e8e8e8;border-radius:4px;"></div>
<div class="a" style="left:81px;top:336px;width:132px;height:37px;background:#e8e8e8;border-radius:4px;"></div>
<div class="a" style="left:217px;top:336px;width:85px;height:37px;background:#e8e8e8;border-radius:4px;"></div>
<div class="a" style="left:306px;top:336px;width:95px;height:37px;background:#e8e8e8;border-radius:4px;"></div>
<div class="a" style="left:405px;top:336px;width:96px;height:37px;background:#e8e8e8;border-radius:4px;"></div>
<div class="a" style="left:505px;top:336px;width:82px;height:37px;background:#e8e8e8;border-radius:4px;"></div>
<div class="a" style="left:591px;top:336px;width:71px;height:37px;background:#e8e8e8;border-radius:4px;"></div>
<div class="a" style="left:666px;top:336px;width:72px;height:37px;background:#e8e8e8;border-radius:4px;"></div>
<div class="a" style="left:742px;top:336px;width:97px;height:37px;background:#e8e8e8;border-radius:4px;"></div>
<div class="a" style="left:843px;top:336px;width:106px;height:37px;background:#e8e8e8;border-radius:4px;"></div>
<div class="a" style="left:953px;top:336px;width:84px;height:37px;background:#e8e8e8;border-radius:4px;"></div>
<div class="a" style="left:1041px;top:336px;width:127px;height:37px;background:#e8e8e8;border-radius:4px;"></div>
<div class="a" style="left:1172px;top:336px;width:33px;height:37px;background:#e8e8e8;border-radius:4px;"></div>
<svg class="a" style="left:37.3px;top:347.5px" width="10" height="10" viewBox="0 0 10 10"><path d="M1,1 L9,9 M9,1 L1,9" stroke="#333" stroke-width="1.3" fill="none"/></svg>
<div class="a nw" style="left:90px;top:345px;font-size:14.2px;color:#4b97ec">SO-230062335</div>
<svg class="a" style="left:250.5px;top:347px" width="18" height="14" viewBox="0 0 18 14"><polyline points="2,6.5 6.6,11 15.6,2" fill="none" stroke="#45dd57" stroke-width="3.1"/></svg>
<div class="a nw" style="right:818px;top:345px;font-size:14.6px;color:#333">$0.00</div>
<div class="a nw" style="right:718px;top:345px;font-size:14.6px;color:#333">5/4/23</div>
<div class="a nw" style="left:514px;top:345px;font-size:14.6px;color:#333">Expedited</div>
<div class="a nw" style="right:557px;top:345px;font-size:14.6px;color:#333">30.21</div>
<div class="a nw" style="right:481px;top:345px;font-size:14.6px;color:#333">0.34</div>
<svg class="a" style="left:781.5px;top:347px" width="18" height="14" viewBox="0 0 18 14"><polyline points="2,6.5 6.6,11 15.6,2" fill="none" stroke="#45dd57" stroke-width="3.1"/></svg>
<svg class="a" style="left:891px;top:347.5px" width="10" height="10" viewBox="0 0 10 10"><path d="M1,1 L9,9 M9,1 L1,9" stroke="#333" stroke-width="1.3" fill="none"/></svg>


<div class="a" style="left:5px;top:371px;width:813px;height:6px;background:#e8e8e8"></div>
<div class="a" style="left:5px;top:378px;width:1205px;height:1px;background:#dde0e3"></div>
<div class="a" style="left:7px;top:381px;width:70px;height:37px;background:#e8e8e8;border-radius:4px;"></div>
<div class="a nw" style="left:-58px;width:200px;text-align:center;top:390.5px;font-size:13.6px;font-weight:bold;color:#222;letter-spacing:-0.2px">18.5%</div>
<div class="a" style="left:81px;top:381px;width:132px;height:37px;background:#e8e8e8;border-radius:4px;"></div>
<div class="a" style="left:217px;top:381px;width:85px;height:37px;background:#e8e8e8;border-radius:4px;"></div>
<div class="a nw" style="left:159.5px;width:200px;text-align:center;top:390.5px;font-size:13.6px;font-weight:bold;color:#222;letter-spacing:-0.2px">88.1%</div>
<div class="a" style="left:306px;top:381px;width:95px;height:37px;background:#e8e8e8;border-radius:4px;"></div>
<div class="a nw" style="left:253.5px;width:200px;text-align:center;top:390.5px;font-size:13.6px;font-weight:bold;color:#222;letter-spacing:-0.2px">$62,499.46</div>
<div class="a" style="left:405px;top:381px;width:96px;height:37px;background:#e8e8e8;border-radius:4px;"></div>
<div class="a" style="left:505px;top:381px;width:82px;height:37px;background:#e8e8e8;border-radius:4px;"></div>
<div class="a" style="left:591px;top:381px;width:71px;height:37px;background:#e8e8e8;border-radius:4px;"></div>
<div class="a" style="left:666px;top:381px;width:72px;height:37px;background:#e8e8e8;border-radius:4px;"></div>
<div class="a" style="left:742px;top:381px;width:97px;height:37px;background:#e8e8e8;border-radius:4px;"></div>
<div class="a nw" style="left:690.5px;width:200px;text-align:center;top:390.5px;font-size:13.6px;font-weight:bold;color:#222;letter-spacing:-0.2px">79.5%</div>
<div class="a" style="left:843px;top:381px;width:106px;height:37px;background:#e8e8e8;border-radius:4px;"></div>
<div class="a nw" style="left:796px;width:200px;text-align:center;top:390.5px;font-size:13.6px;font-weight:bold;color:#222;letter-spacing:-0.2px">75.5%</div>
<div class="a" style="left:953px;top:381px;width:84px;height:37px;background:#e8e8e8;border-radius:4px;"></div>
<div class="a nw" style="left:895px;width:200px;text-align:center;top:390.5px;font-size:13.6px;font-weight:bold;color:#222;letter-spacing:-0.2px">100.0%</div>
<div class="a" style="left:1041px;top:381px;width:127px;height:37px;background:#e8e8e8;border-radius:4px;"></div>
<div class="a nw" style="left:1004.5px;width:200px;text-align:center;top:390.5px;font-size:13.6px;font-weight:bold;color:#222;letter-spacing:-0.2px">100.0%</div>
<div class="a" style="left:1172px;top:381px;width:37px;height:37px;background:#e8e8e8;border-radius:4px;"></div>
<div class="a" style="left:5px;top:378px;width:1px;height:42px;background:#dde0e3"></div>
<div class="a" style="left:79px;top:378px;width:1px;height:42px;background:#dde0e3"></div>
<div class="a" style="left:215px;top:378px;width:1px;height:42px;background:#dde0e3"></div>
<div class="a" style="left:304px;top:378px;width:1px;height:42px;background:#dde0e3"></div>
<div class="a" style="left:403px;top:378px;width:1px;height:42px;background:#dde0e3"></div>
<div class="a" style="left:503px;top:378px;width:1px;height:42px;background:#dde0e3"></div>
<div class="a" style="left:589px;top:378px;width:1px;height:42px;background:#dde0e3"></div>
<div class="a" style="left:664px;top:378px;width:1px;height:42px;background:#dde0e3"></div>
<div class="a" style="left:740px;top:378px;width:1px;height:42px;background:#dde0e3"></div>
<div class="a" style="left:841px;top:378px;width:1px;height:42px;background:#dde0e3"></div>
<div class="a" style="left:951px;top:378px;width:1px;height:42px;background:#dde0e3"></div>
<div class="a" style="left:1039px;top:378px;width:1px;height:42px;background:#dde0e3"></div>
<div class="a" style="left:1170px;top:378px;width:1px;height:42px;background:#dde0e3"></div>
<div class="a" style="left:1209px;top:378px;width:1px;height:42px;background:#dde0e3"></div>
<div class="a" style="left:5px;top:420px;width:1205px;height:1px;background:#dde0e3"></div>
</div>
<!--/TABLE-->
<!--REST-->
<div class="a" style="left:307px;top:306px;width:202px;height:35px;background:#fff;border-radius:5px;box-shadow:0 0 0 1px #eceef0,0 1px 3px rgba(0,0,0,0.06)"></div>
<svg class="a" style="left:315px;top:316px" width="16" height="16" viewBox="0 0 16 16"><circle cx="6.5" cy="6.5" r="5" fill="none" stroke="#333" stroke-width="1.6"/><path d="M10.3,10.3 L14.5,14.5" stroke="#333" stroke-width="1.8"/></svg>
<div class="a nw" style="left:338px;top:314px;font-size:14.9px;color:#666">Search...</div>
<div class="a" style="left:516px;top:306px;width:202px;height:35px;background:#fff;border-radius:5px;box-shadow:0 0 0 1px #eceef0,0 1px 3px rgba(0,0,0,0.06)"></div>
<div class="a nw" style="left:524px;top:314px;font-size:15.3px;color:#555">4/4/2023 - 5/4/2023</div>
<svg class="a" style="left:699px;top:316px" width="16" height="16" viewBox="0 0 16 16"><rect x="1.5" y="3" width="13" height="11.5" rx="1" fill="none" stroke="#333" stroke-width="1.5"/><rect x="1.5" y="3" width="13" height="3" fill="#333"/><path d="M4.5,1 V4 M11.5,1 V4" stroke="#333" stroke-width="1.5"/><path d="M4,9 H10 M4,11.5 H8" stroke="#333" stroke-width="1.2"/></svg>
<div class="a" style="left:725px;top:306px;width:32px;height:35px;background:#fff;border-radius:5px;box-shadow:0 0 0 1px #eceef0,0 1px 3px rgba(0,0,0,0.06)"></div>
<div class="a" style="left:761px;top:306px;width:32px;height:35px;background:#fff;border-radius:5px;box-shadow:0 0 0 1px #eceef0,0 1px 3px rgba(0,0,0,0.06)"></div>
<div class="a" style="left:797px;top:306px;width:33px;height:35px;background:#fff;border-radius:5px;box-shadow:0 0 0 1px #eceef0,0 1px 3px rgba(0,0,0,0.06)"></div>
<div class="a" style="left:834px;top:306px;width:32px;height:35px;background:#fff;border-radius:5px;box-shadow:0 0 0 1px #eceef0,0 1px 3px rgba(0,0,0,0.06)"></div>
<div class="a" style="left:870px;top:306px;width:33px;height:35px;background:#fff;border-radius:5px;box-shadow:0 0 0 1px #eceef0,0 1px 3px rgba(0,0,0,0.06)"></div>
<svg class="a" style="left:734px;top:316px" width="14" height="14" viewBox="0 0 14 14"><rect x="0" y="0" width="6.3" height="6.3" fill="#222"/><rect x="7.5" y="0" width="6.3" height="6.3" fill="#222"/><rect x="0" y="7.5" width="6.3" height="6.3" fill="#222"/><rect x="7.5" y="7.5" width="6.3" height="6.3" fill="#222"/></svg>
<svg class="a" style="left:768px;top:314px" width="18" height="18" viewBox="0 0 18 18"><path d="M2,2.5 H16 L10.5,9 V15.5 L7.5,13.5 V9 Z" fill="none" stroke="#333" stroke-width="1.5" stroke-linejoin="round"/></svg>
<svg class="a" style="left:805px;top:314px" width="16" height="18" viewBox="0 0 16 18"><path d="M4,1 V9 M8,1 V9 M12,1 V9" stroke="#333" stroke-width="2"/><path d="M2,14 H14 M4.5,11.5 L2,14 L4.5,16.5 M11.5,11.5 L14,14 L11.5,16.5" stroke="#333" stroke-width="1.3" fill="none"/></svg>
<svg class="a" style="left:842px;top:315px" width="16" height="15" viewBox="0 0 16 15"><path d="M1,2 H5 M1,5.5 H5 M1,9 H5 M1,12.5 H5" stroke="#333" stroke-width="1.6"/><path d="M7,2 H15 M7,5.5 H15 M7,9 H15 M7,12.5 H15" stroke="#666" stroke-width="1.2"/></svg>
<svg class="a" style="left:878px;top:314px" width="18" height="18" viewBox="0 0 18 18"><path d="M11,6 V3.5 L8,1 H2 V16 H11 V12" fill="none" stroke="#333" stroke-width="1.4"/><path d="M8,1 V4 H11" fill="none" stroke="#333" stroke-width="1.2"/><path d="M6,9 H16 M13.5,6.5 L16,9 L13.5,11.5" stroke="#333" stroke-width="1.4" fill="none"/></svg>
<div class="a" style="left:305px;top:766px;width:125px;height:32px;background:#48dd5e;border-radius:5px"></div>
<div class="a nw" style="left:315.5px;top:774px;font-size:13.1px;color:#222">24,611 records</div>
<svg class="a" style="left:407px;top:774px" width="12" height="13" viewBox="0 0 12 13"><path d="M10,5 A4.3,4.3 0 1 0 10.3,8" fill="none" stroke="#222" stroke-width="1.9"/><polygon points="11.5,1.5 11.5,6.5 6.5,6.5" fill="#222"/></svg>
<div class="a" style="left:435px;top:766px;width:97px;height:32px;background:#fe6549;border-radius:5px"></div>
<div class="a nw" style="left:445px;top:774px;font-size:13.8px;color:#fff">1 selected</div>
<svg class="a" style="left:513px;top:776px" width="10" height="10" viewBox="0 0 10 10"><path d="M1.5,1.5 L8.5,8.5 M8.5,1.5 L1.5,8.5" stroke="#fff" stroke-width="2.4"/></svg>
<div class="a" style="left:537px;top:766px;width:132px;height:32px;background:#fdd033;border-radius:5px"></div>
<svg class="a" style="left:550px;top:774px" width="10" height="12" viewBox="0 0 10 12"><rect x="0.5" y="2" width="9" height="9.5" fill="#333"/><rect x="2" y="0" width="1.5" height="3" fill="#333"/><rect x="6.5" y="0" width="1.5" height="3" fill="#333"/></svg>
<div class="a nw" style="left:563.5px;top:772px;font-size:14.1px;color:#222">4/4/23 - 5/4/23</div>
<div class="a" style="left:674px;top:766px;width:137px;height:32px;background:#e1e3e7;border-radius:5px"></div>
<div class="a nw" style="left:684px;top:773px;font-size:13.2px;color:#333"><b>Type</b>: SalesOrder</div>
<svg class="a" style="left:792px;top:776px" width="9" height="9" viewBox="0 0 9 9"><path d="M1.2,1.2 L7.8,7.8 M7.8,1.2 L1.2,7.8" stroke="#333" stroke-width="2.2"/></svg>
<div class="a" style="left:1480px;top:766px;width:30px;height:31px;background:#ececec;border-radius:5px"></div>
<svg class="a" style="left:1489px;top:773px" width="12" height="15" viewBox="0 0 12 15"><rect x="0" y="2" width="12" height="2" fill="#333"/><rect x="4" y="0" width="4" height="2" fill="#333"/><path d="M1.3,4.5 H10.7 L10,14.5 H2 Z" fill="#333"/><path d="M4,6 V13 M6,6 V13 M8,6 V13" stroke="#ececec" stroke-width="0.9"/></svg>
<div class="a nw" style="left:833px;top:767px;font-size:27.1px;color:#f53a3a">"Ideal" would have come from NJ, saving $6.52.</div>
<div class="a" style="left:301px;top:814px;width:1211px;height:130px;background:#fff;border:3px solid #f83c3e;box-shadow:1px 2px 4px rgba(0,0,0,0.35)"></div>
<div class="a" style="left:395px;top:819px;width:139px;height:28px;background:#474747;border-radius:5px"></div>
<div class="a nw" style="left:403.5px;top:824px;font-size:14.4px;font-weight:bold;color:#fff">Location</div>
<div class="a" style="left:538px;top:819px;width:93.5px;height:28px;background:#474747;border-radius:5px"></div>
<div class="a nw" style="left:546.5px;top:824px;font-size:14.4px;font-weight:bold;color:#fff">Mileage</div>
<div class="a" style="left:636px;top:819px;width:158px;height:28px;background:#474747;border-radius:5px"></div>
<div class="a nw" style="left:644.5px;top:824px;font-size:14.4px;font-weight:bold;color:#fff">Package Count</div>
<div class="a" style="left:798.5px;top:819px;width:215.5px;height:28px;background:#474747;border-radius:5px"></div>
<div class="a nw" style="left:807.0px;top:824px;font-size:14.4px;font-weight:bold;color:#fff">Carrier</div>
<div class="a" style="left:1018px;top:819px;width:142px;height:28px;background:#474747;border-radius:5px"></div>
<div class="a nw" style="left:1026.5px;top:824px;font-size:14.4px;font-weight:bold;color:#fff">Service Level</div>
<div class="a" style="left:1164px;top:819px;width:205px;height:28px;background:#474747;border-radius:5px"></div>
<div class="a nw" style="left:1172.5px;top:824px;font-size:14.4px;font-weight:bold;color:#fff">Carrier Service Cost</div>
<div class="a" style="left:1373px;top:819px;width:136px;height:28px;background:#474747;border-radius:5px"></div>
<div class="a nw" style="left:1381.5px;top:824px;font-size:14.4px;font-weight:bold;color:#fff">Profit Margin</div>
<div class="a" style="left:309px;top:852px;width:82px;height:36.5px;background:#474747;border-radius:5px"></div>
<div class="a nw" style="left:318px;top:860px;font-size:14.4px;font-weight:bold;color:#fff">Actual</div>
<div class="a" style="left:309px;top:893px;width:82px;height:36.5px;background:#48dd5e;border-radius:5px"></div>
<div class="a nw" style="left:318px;top:901px;font-size:14.4px;font-weight:bold;color:#fff">Ideal</div>
<div class="a" style="left:395px;top:852px;width:139px;height:36.5px;background:#e8e8e8;border-radius:5px"></div>
<div class="a" style="left:395px;top:893px;width:139px;height:36.5px;background:#f6f7f9;border-radius:5px"></div>
<div class="a nw" style="left:403.5px;top:861px;font-size:14.3px;color:#333">Newnan GA</div>
<div class="a nw" style="left:403.5px;top:902px;font-size:14.3px;color:#333">Rockaway NJ</div>
<div class="a" style="left:538px;top:852px;width:93.5px;height:36.5px;background:#e8e8e8;border-radius:5px"></div>
<div class="a" style="left:538px;top:893px;width:93.5px;height:36.5px;background:#f6f7f9;border-radius:5px"></div>
<div class="a nw" style="left:546.5px;top:861px;font-size:14.3px;color:#333">626.3</div>
<div class="a nw" style="left:546.5px;top:902px;font-size:14.3px;color:#333">147.4</div>
<div class="a" style="left:636px;top:852px;width:158px;height:36.5px;background:#e8e8e8;border-radius:5px"></div>
<div class="a" style="left:636px;top:893px;width:158px;height:36.5px;background:#f6f7f9;border-radius:5px"></div>
<div class="a nw" style="left:644.5px;top:861px;font-size:14.3px;color:#333">1</div>
<div class="a nw" style="left:644.5px;top:902px;font-size:14.3px;color:#333">1</div>
<div class="a" style="left:798.5px;top:852px;width:215.5px;height:36.5px;background:#e8e8e8;border-radius:5px"></div>
<div class="a" style="left:798.5px;top:893px;width:215.5px;height:36.5px;background:#f6f7f9;border-radius:5px"></div>
<div class="a nw" style="left:807.0px;top:861px;font-size:14.3px;color:#333">United Parcel Service</div>
<div class="a nw" style="left:807.0px;top:902px;font-size:14.3px;color:#333">United Parcel Service</div>
<div class="a" style="left:1018px;top:852px;width:142px;height:36.5px;background:#e8e8e8;border-radius:5px"></div>
<div class="a" style="left:1018px;top:893px;width:142px;height:36.5px;background:#f6f7f9;border-radius:5px"></div>
<div class="a nw" style="left:1026.5px;top:861px;font-size:14.3px;color:#333">UPS 2nd Day</div>
<div class="a nw" style="left:1026.5px;top:902px;font-size:14.3px;color:#333">UPS 2nd Day</div>
<div class="a" style="left:1164px;top:852px;width:205px;height:36.5px;background:#e8e8e8;border-radius:5px"></div>
<div class="a" style="left:1164px;top:893px;width:205px;height:36.5px;background:#f6f7f9;border-radius:5px"></div>
<div class="a nw" style="left:1172.5px;top:861px;font-size:14.3px;color:#333">$27.38</div>
<div class="a nw" style="left:1172.5px;top:902px;font-size:14.3px;color:#333">$20.86</div>
<div class="a" style="left:1373px;top:852px;width:136px;height:36.5px;background:#e8e8e8;border-radius:5px"></div>
<div class="a" style="left:1373px;top:893px;width:136px;height:36.5px;background:#f6f7f9;border-radius:5px"></div>
<div class="a nw" style="left:1381.5px;top:861px;font-size:14.3px;color:#333">22.0%</div>
<div class="a nw" style="left:1381.5px;top:902px;font-size:14.3px;color:#333">34.3%</div>
<div class="a" style="left:395px;top:852px;width:203px;height:75px;background:transparent;border:3px solid #f83c3e;box-shadow:1px 2px 4px rgba(0,0,0,0.35)"></div>
<div class="a" style="left:1521px;top:307px;width:394px;height:60px;background:#fe6549;border-radius:6px"></div>
<svg class="a" style="left:1528px;top:314px" width="42" height="46" viewBox="0 0 42 46"><polygon points="20.55,2.9 37.87,12.9 37.87,32.9 20.55,42.9 3.23,32.9 3.23,12.9" fill="#fff"/><polygon points="20.55,7.3 34.06,15.1 34.06,30.7 20.55,38.5 7.04,30.7 7.04,15.1" fill="#fe6549"/><polygon points="20.55,11.7 30.25,17.3 30.25,28.5 20.55,34.1 10.85,28.5 10.85,17.3" fill="#fff"/><polygon points="14.55,20.7 20.55,23.2 30.3,17.4 30.3,21.6 20.55,27.7 14.55,24.4" fill="#fe6549"/></svg>
<div class="a nw" style="left:1571px;top:317px;font-size:33px;color:#fff;-webkit-text-stroke:0.9px #fff;letter-spacing:-0.4px">Ideal Order</div>
<svg class="a" style="left:1866px;top:317px" width="36" height="36" viewBox="0 0 36 36"><circle cx="18" cy="18" r="14.6" fill="none" stroke="#fff" stroke-width="3.4"/><path d="M7.7,7.7 L28.3,28.3" stroke="#fff" stroke-width="3.4"/></svg>
<div class="a" style="left:1521px;top:372px;width:394px;height:134px;background:#f7f8fa;border-radius:6px"></div>
<div class="a nw" style="left:1532px;top:385px;font-size:14.9px;color:#222">Order Number</div>
<div class="a nw" style="right:18px;top:385px;font-size:14.3px;color:#333">SO-230062409</div>
<div class="a" style="left:1531px;top:406px;width:374px;height:1px;background:#dfe1e4;"></div>
<div class="a nw" style="left:1532px;top:409px;font-size:14.9px;color:#222">Sales Order Number</div>
<div class="a nw" style="right:18px;top:409px;font-size:14.3px;color:#333">FT2305040263</div>
<div class="a" style="left:1531px;top:430px;width:374px;height:1px;background:#dfe1e4;"></div>
<div class="a nw" style="left:1532px;top:433px;font-size:14.9px;color:#222">Order Date</div>
<div class="a nw" style="right:18px;top:433px;font-size:14.3px;color:#333">5/4/2023 4:47:36 PM</div>
<div class="a" style="left:1531px;top:454px;width:374px;height:1px;background:#dfe1e4;"></div>
<div class="a nw" style="left:1532px;top:457px;font-size:14.9px;color:#222">Shipping Service Level</div>
<div class="a nw" style="right:18px;top:457px;font-size:14.3px;color:#333">Expedited</div>
<div class="a" style="left:1531px;top:478px;width:374px;height:1px;background:#dfe1e4;"></div>
<div class="a nw" style="left:1532px;top:481px;font-size:14.9px;color:#222">Sales Channel</div>
<div class="a nw" style="right:18px;top:481px;font-size:14.3px;color:#333">Fidget Things</div>
<div class="a" style="left:1521px;top:514px;width:394px;height:107px;background:#f7f8fa;border-radius:6px"></div>
<div class="a" style="left:1521px;top:627px;width:394px;height:105px;background:#f7f8fa;border-radius:6px"></div>
<div class="a nw" style="left:1531px;top:528px;font-size:15.1px;color:#222">Possible Decrease in Shipping Costs</div>
<div class="a nw" style="left:1531px;top:554px;font-size:41px;color:#1a1d22">$6.52</div>
<div class="a nw" style="left:1531px;top:638px;font-size:15.1px;color:#222">Possible Increase in Gross Profit Margin</div>
<div class="a nw" style="left:1531px;top:663px;font-size:41px;color:#1a1d22;transform:scaleX(0.85);transform-origin:0 0">12.3%</div>
<div class="a" style="left:1524px;top:511px;width:316px;height:213px;background:transparent;border:3px solid #f83c3e;box-shadow:1px 2px 4px rgba(0,0,0,0.35)"></div>
<div class="a" style="left:1521px;top:737px;width:394px;height:172px;background:#f7f8fa;border-radius:6px"></div>
<div class="a nw" style="left:1532px;top:753.5px;font-size:15px;color:#222">Total Revenue</div>
<div class="a nw" style="right:18px;top:754.0px;font-size:14.2px;color:#333">$52.82</div>
<div class="a nw" style="left:1532px;top:778.5px;font-size:15px;color:#222">Total Product Cost</div>
<div class="a nw" style="right:18px;top:779.0px;font-size:14.2px;color:#333">$13.82</div>
<div class="a nw" style="left:1532px;top:803.0px;font-size:15px;color:#222">Total Shipping Cost</div>
<div class="a nw" style="right:18px;top:803.5px;font-size:14.2px;color:#333">$27.38</div>
<div class="a nw" style="left:1532px;top:828.0px;font-size:15px;color:#222">Total Costs</div>
<div class="a nw" style="right:18px;top:828.5px;font-size:14.2px;color:#333">$41.20</div>
<div class="a nw" style="left:1532px;top:855.0px;font-size:15px;color:#222">Gross Profit</div>
<div class="a nw" style="right:18px;top:855.5px;font-size:14.2px;color:#333">$11.62</div>
<div class="a nw" style="left:1532px;top:879.3px;font-size:15px;color:#222">Gross Profit Margin</div>
<div class="a nw" style="right:18px;top:879.8px;font-size:14.2px;color:#333">22.0%</div>
<div class="a" style="left:1531px;top:748px;width:374px;height:3px;background:#e2e3e5;"></div>
<div class="a" style="left:1531px;top:774.5px;width:374px;height:3.0px;background:#e2e3e5;"></div>
<div class="a" style="left:1531px;top:824.5px;width:374px;height:3.0px;background:#e2e3e5;"></div>
<div class="a" style="left:1531px;top:850.5px;width:374px;height:3.0px;background:#e2e3e5;"></div>
<div class="a" style="left:1531px;top:800px;width:374px;height:1px;background:#e2e3e5;"></div>
<div class="a" style="left:1531px;top:876px;width:374px;height:1px;background:#e2e3e5;"></div>
<svg class="a" style="left:0;top:0;filter:drop-shadow(2px 3px 2.5px rgba(0,0,0,0.45))" width="1922" height="979" viewBox="0 0 1922 979"><line x1="1416.5" y1="775.6" x2="1533.95" y2="628.0" stroke="#fc4343" stroke-width="9" stroke-linecap="round"/><polygon points="1551.7,605.5 1522.7,620 1545.2,636" fill="#fc4343"/><line x1="840.8" y1="812.2" x2="651.75" y2="881.8499999999999" stroke="#fc4343" stroke-width="9" stroke-linecap="round"/><polygon points="624.4,891.3 646.7,868.3 656.8,895.4" fill="#fc4343"/><line x1="1357.2" y1="804.6" x2="1279.3000000000002" y2="860.75" stroke="#fc4343" stroke-width="9" stroke-linecap="round"/><polygon points="1255,877.6 1270.9,849 1287.7,872.5" fill="#fc4343"/></svg>
<div class="a" style="left:1919px;top:96px;width:1px;height:883px;background:#e2e2e2;box-shadow:-1px 0 3px rgba(0,0,0,0.07)"></div>
<div class="a" style="left:1920px;top:0;width:2px;height:979px;background:#fff"></div>
<div class="a" style="left:300px;top:977px;width:1622px;height:2px;background:#e9e9e9;box-shadow:0 -2px 4px rgba(0,0,0,0.05)"></div>
<!--/REST-->
<!-- top shadow -->
<div class="a" style="left:0;top:0;width:300px;height:8px;background:linear-gradient(#1f2023 0px,#1f2023 1.5px,#27282b 3.5px,#323336 5.5px,#36373b 7.5px)"></div><div class="a" style="left:300px;top:0;width:1619px;height:9px;background:linear-gradient(#929292 0px,#929292 1.5px,#bababa 3.5px,#e0e0e0 5.5px,#f4f5f7 7.5px,#f7f8fa 8.5px)"></div>
</body></html>
